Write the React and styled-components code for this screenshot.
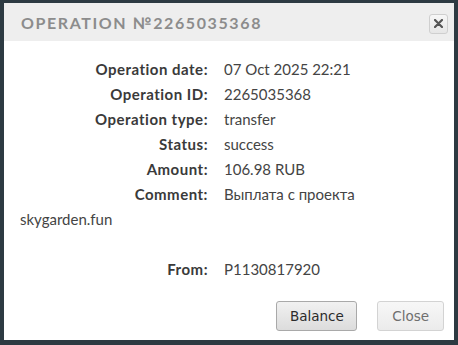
import React from "react";
import styled, { createGlobalStyle } from "styled-components";

const Global = createGlobalStyle`
  html, body { margin: 0; padding: 0; background: #2d3a42; }
  body { width: 458px; height: 345px; overflow: hidden; }
`;

const Page = styled.div`
  padding: 3px 4px 0 4px;
  height: 345px;
  box-sizing: border-box;
`;

const Dialog = styled.div`
  width: 450px;
  height: 337px;
  background: #fff;
  box-sizing: border-box;
  display: flex;
  flex-direction: column;
  font-family: Lato, "Open Sans", sans-serif;
`;

const Header = styled.div`
  height: 38px;
  background: #eeeeee;
  display: flex;
  align-items: center;
  justify-content: space-between;
  padding: 0 6px 0 17px;
`;

const Title = styled.div`
  font-family: Lato, sans-serif;
  font-weight: 700;
  font-size: 16px;
  letter-spacing: 1.6px;
  color: #8c8c8c;
  padding-top: 1px;
`;

const CloseX = styled.button`
  width: 19px;
  height: 20px;
  margin-top: 3px;
  padding: 0;
  border: 1px solid #cfcfcf;
  border-radius: 3px;
  background: linear-gradient(#f7f7f7, #e6e6e6);
  display: flex;
  align-items: center;
  justify-content: center;
`;

const Body = styled.div`
  padding: 16px 16px 0 16px;
  font-size: 15px;
  line-height: 25px;
  color: #333;
  flex: 1;
`;

const Row = styled.div`
  min-height: 25px;
`;

const Label = styled.span`
  float: left;
  width: 188px;
  margin-right: 16px;
  text-align: right;
  font-weight: 700;
  letter-spacing: 0.5px;
  color: #3a3a3a;
`;

const Value = styled.span`
  color: #444;
`;

const Footer = styled.div`
  display: flex;
  justify-content: flex-end;
  gap: 20px;
  padding: 0 10px 9px 0;
`;

const Button = styled.button`
  height: 30px;
  padding: 0 ${(p) => (p.$primary ? "12.5px" : "14px")};
  font-family: "DejaVu Sans", Verdana, sans-serif;
  font-size: 13.5px;
  color: ${(p) => (p.$primary ? "#2b2b2b" : "#6f6f6f")};
  border: 1px solid ${(p) => (p.$primary ? "#a9a9a9" : "#d3d3d3")};
  border-radius: 3px;
  background: ${(p) =>
    p.$primary
      ? "linear-gradient(#f1f1f1, #dcdcdc)"
      : "linear-gradient(#f7f7f7, #ebebeb)"};
`;

const rows = [
  ["Operation date:", "07 Oct 2025 22:21"],
  ["Operation ID:", "2265035368"],
  ["Operation type:", "transfer"],
  ["Status:", "success"],
  ["Amount:", "106.98 RUB"],
  ["Comment:", "Выплата с проекта skygarden.fun"],
];

export default function App() {
  return (
    <>
      <Global />
      <Page>
        <Dialog>
          <Header>
            <Title>OPERATION №2265035368</Title>
            <CloseX aria-label="close">
              <svg width="9" height="9" viewBox="0 0 9 9">
                <path d="M1 1L8 8M8 1L1 8" stroke="#555" strokeWidth="2.2" strokeLinecap="round" />
              </svg>
            </CloseX>
          </Header>
          <Body>
            {rows.map(([l, v]) => (
              <Row key={l}>
                <Label>{l}</Label>
                <Value>{v}</Value>
              </Row>
            ))}
            <Row />
            <Row>
              <Label>From:</Label>
              <Value>P1130817920</Value>
            </Row>
          </Body>
          <Footer>
            <Button $primary>Balance</Button>
            <Button>Close</Button>
          </Footer>
        </Dialog>
      </Page>
    </>
  );
}
